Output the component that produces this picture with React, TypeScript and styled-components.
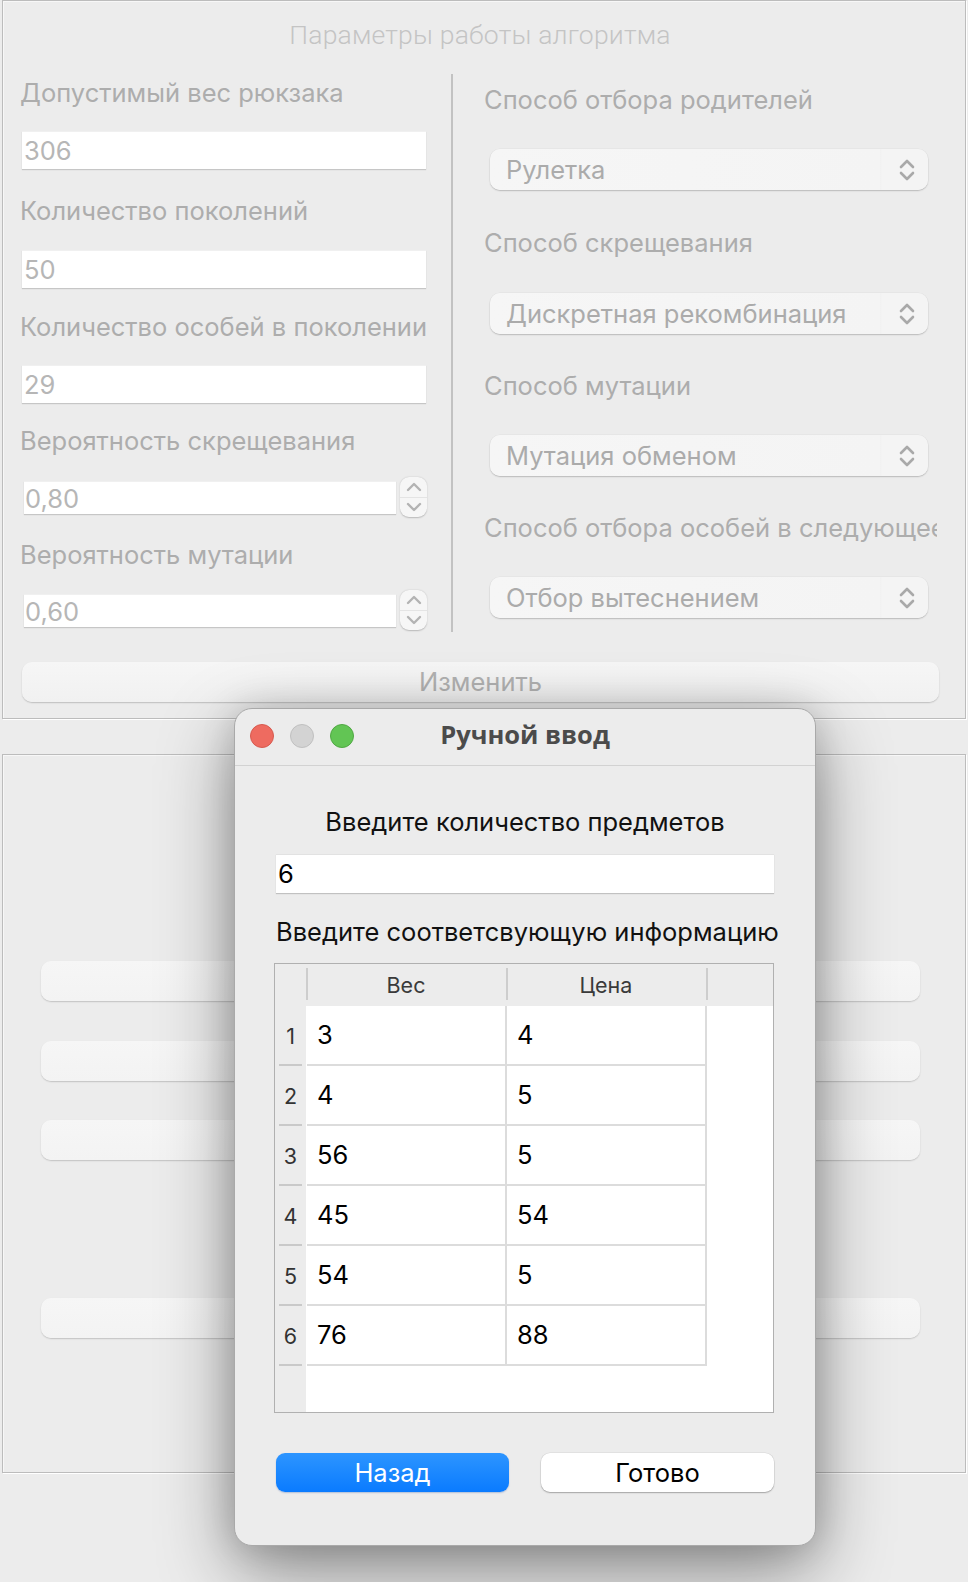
import React from "react";
import styled, { createGlobalStyle } from "styled-components";

const Global = createGlobalStyle`
  html, body { margin: 0; padding: 0; background: #ececec; }
  body { font-family: Inter, "Liberation Sans", "Noto Sans", sans-serif; }
  #root { width: 968px; height: 1582px; }
`;

const Page = styled.div`
  position: relative;
  width: 968px;
  height: 1582px;
  background: #ececec;
  overflow: hidden;
  display: flex;
  flex-direction: column;
`;

const GroupBox = styled.section<{ $gapTop: number }>`
  box-sizing: border-box;
  margin: ${(p) => p.$gapTop}px 2px 0 2px;
  width: 964px;
  height: 719px;
  border: 1px solid #bcbcbc;
  box-shadow: inset 1px 1px 0 #f7f7f7, 1px 1px 0 #ffffff;
  display: flex;
  flex-direction: column;
  flex-shrink: 0;
`;

const GroupTitle = styled.div`
  margin-top: 14px;
  height: 40px;
  line-height: 40px;
  text-align: center;
  padding-right: 8px;
  font-family: Roboto, Inter, sans-serif;
  font-weight: 300;
  font-size: 26.5px;
  color: #c4c4c4;
  letter-spacing: 0.2px;
`;

const Columns = styled.div`
  margin-top: 19px;
  height: 558px;
  display: flex;
  padding-left: 17px;
`;

const LeftColumn = styled.div`
  width: 407px;
  display: flex;
  flex-direction: column;
`;

const Divider = styled.div`
  width: 2px;
  margin-left: 24px;
  background: #c2c2c2;
`;

const RightColumn = styled.div`
  width: 453px;
  margin-left: 31px;
  padding-top: 7px;
  display: flex;
  flex-direction: column;
  overflow: hidden;
`;

const Label = styled.div<{ $gap?: number }>`
  margin-top: ${(p) => p.$gap ?? 0}px;
  height: 38px;
  line-height: 38px;
  font-size: 25.5px;
  color: #adadad;
  white-space: nowrap;
`;

const LineEdit = styled.div<{ $gap: number }>`
  box-sizing: border-box;
  margin: ${(p) => p.$gap}px 0 0 2px;
  width: 404px;
  height: 38px;
  background: #fff;
  border-top: 1px solid #f0f0f0;
  box-shadow: 0 1px 1px rgba(0, 0, 0, 0.16);
  padding-left: 2px;
  line-height: 38px;
  font-size: 25.5px;
  color: #b6b6b6;
`;

const SpinRow = styled.div<{ $gap: number }>`
  margin: ${(p) => p.$gap}px 0 0 4px;
  height: 40px;
  display: flex;
  align-items: center;
`;

const SpinField = styled.div`
  box-sizing: border-box;
  width: 372px;
  height: 33px;
  background: #fff;
  border-top: 1px solid #f0f0f0;
  box-shadow: 0 1px 1px rgba(0, 0, 0, 0.16);
  padding-left: 1px;
  line-height: 33px;
  font-size: 25.5px;
  color: #b6b6b6;
`;

const Stepper = styled.div`
  margin-left: 4px;
  width: 27px;
  height: 40px;
  border-radius: 9px;
  background: #f6f6f6;
  box-shadow: 0 0.5px 1.5px rgba(0, 0, 0, 0.22);
  display: flex;
  flex-direction: column;
`;

const StepHalf = styled.div<{ $top?: boolean }>`
  flex: 1;
  display: flex;
  align-items: center;
  justify-content: center;
  border-bottom: ${(p) => (p.$top ? "1px solid #e4e4e4" : "none")};
`;

const Combo = styled.div<{ $gap: number }>`
  box-sizing: border-box;
  margin: ${(p) => p.$gap}px 0 0 6px;
  width: 438px;
  height: 41px;
  flex-shrink: 0;
  border-radius: 10px;
  background: linear-gradient(90deg, #f6f6f6 0%, #f4f4f4 89%, #f1f1f1 89.2%, #f4f4f4 89.5%, #f4f4f4 100%);
  box-shadow: 0 1px 1.5px rgba(0, 0, 0, 0.2), 0 0 0 0.5px rgba(0, 0, 0, 0.04);
  display: flex;
  align-items: center;
  justify-content: space-between;
  padding: 0 13px 0 16px;
  font-size: 25.5px;
  color: #ababab;
  white-space: nowrap;
`;

const WideButton = styled.div`
  box-sizing: border-box;
  margin: 30px 0 0 19px;
  width: 917px;
  height: 40px;
  border-radius: 10px;
  background: linear-gradient(180deg, #f6f6f6, #f1f1f1);
  box-shadow: 0 1px 1.5px rgba(0, 0, 0, 0.2);
  text-align: center;
  line-height: 40px;
  font-size: 25.5px;
  color: #b1b1b1;
`;

const GhostButton = styled.div<{ $gap: number }>`
  margin: ${(p) => p.$gap}px 0 0 38px;
  width: 879px;
  height: 40px;
  border-radius: 10px;
  background: linear-gradient(180deg, #f6f6f6, #f3f3f3);
  box-shadow: 0 1px 1.5px rgba(0, 0, 0, 0.18);
`;

/* ---------- Dialog ---------- */

const Dialog = styled.div`
  position: absolute;
  left: 234px;
  top: 708px;
  width: 582px;
  height: 838px;
  box-sizing: border-box;
  border-radius: 18px;
  background: #ececec;
  border: 1px solid #a9a9a9;
  box-shadow: 0 26px 75px rgba(0, 0, 0, 0.42), 0 0 34px rgba(0, 0, 0, 0.14);
  display: flex;
  flex-direction: column;
  overflow: hidden;
`;

const TitleBar = styled.div`
  position: relative;
  height: 56px;
  flex-shrink: 0;
  border-bottom: 1px solid #d2d2d2;
  display: flex;
  align-items: center;
  justify-content: center;
`;

const Lights = styled.div`
  position: absolute;
  left: 15px;
  top: 15px;
  display: flex;
  gap: 16px;
`;

const Light = styled.div<{ $c: string; $b: string }>`
  width: 24px;
  height: 24px;
  box-sizing: border-box;
  border-radius: 50%;
  background: ${(p) => p.$c};
  border: 1px solid ${(p) => p.$b};
`;

const DialogTitle = styled.div`
  font-family: "Open Sans", Inter, sans-serif;
  font-weight: 700;
  font-size: 25.5px;
  color: #4b4b4b;
  margin-top: -6px;
`;

const DialogBody = styled.div`
  flex: 1;
  padding: 0 41px;
  display: flex;
  flex-direction: column;
`;

const Prompt = styled.div<{ $gap: number; $center?: boolean }>`
  margin-top: ${(p) => p.$gap}px;
  height: 38px;
  line-height: 38px;
  font-size: 25.5px;
  color: #111;
  text-align: ${(p) => (p.$center ? "center" : "left")};
  white-space: nowrap;
`;

const CountInput = styled.div`
  box-sizing: border-box;
  margin-top: 13px;
  height: 39px;
  background: #fff;
  border-top: 1px solid #e2e2e2;
  box-shadow: 0 1px 1px rgba(0, 0, 0, 0.18);
  padding-left: 2px;
  line-height: 38px;
  font-size: 25.5px;
  color: #000;
`;

const Table = styled.div`
  box-sizing: border-box;
  margin: 12px 0 0 -2px;
  width: 500px;
  height: 450px;
  border: 1px solid #b0b0b0;
  background: #fff;
  display: flex;
  flex-direction: column;
`;

const HeaderRow = styled.div`
  height: 42px;
  flex-shrink: 0;
  background: #ececec;
  display: flex;
`;

const Corner = styled.div`
  width: 31px;
`;

const HeaderCell = styled.div`
  position: relative;
  width: 200px;
  text-align: center;
  line-height: 42px;
  font-size: 21.5px;
  color: #3a3a3a;
  &::before {
    content: "";
    position: absolute;
    left: 0;
    top: 4px;
    bottom: 6px;
    width: 2px;
    background: #cdcdcd;
  }
`;

const HeaderTail = styled(HeaderCell)`
  flex: 1;
`;

const TableBody = styled.div`
  flex: 1;
  display: flex;
`;

const RowHeaders = styled.div`
  width: 31px;
  background: #ececec;
  display: flex;
  flex-direction: column;
`;

const RowHeader = styled.div`
  position: relative;
  height: 60px;
  display: flex;
  align-items: center;
  justify-content: center;
  font-size: 21.5px;
  color: #333;
  &::after {
    content: "";
    position: absolute;
    left: 4px;
    right: 4px;
    bottom: 0;
    height: 2px;
    background: #c9c9c9;
  }
`;

const Grid = styled.div`
  display: grid;
  grid-template-columns: 200px 200px;
  grid-auto-rows: 60px;
  align-self: flex-start;
  margin-left: 1px;
`;

const Cell = styled.div`
  box-sizing: border-box;
  border-right: 2px solid #dcdcdc;
  border-bottom: 2px solid #dcdcdc;
  display: flex;
  align-items: center;
  padding-left: 10px;
  padding-bottom: 2px;
  font-size: 25.5px;
  color: #000;
`;

const ButtonRow = styled.div`
  margin-top: 40px;
  display: flex;
  gap: 32px;
`;

const DlgButton = styled.div<{ $primary?: boolean }>`
  box-sizing: border-box;
  flex: 1;
  height: 39px;
  border-radius: 9px;
  text-align: center;
  line-height: 39px;
  font-size: 25.5px;
  color: ${(p) => (p.$primary ? "#fff" : "#000")};
  background: ${(p) => (p.$primary ? "linear-gradient(180deg, #2d95ff 0%, #0a7bff 100%)" : "#fff")};
  box-shadow: ${(p) =>
    p.$primary
      ? "0 1px 1.5px rgba(0, 60, 160, 0.25)"
      : "0 1px 1.5px rgba(0, 0, 0, 0.28), 0 0 0 0.5px rgba(0, 0, 0, 0.08)"};
`;

const UpDown = ({ color = "#a9a9a9" }: { color?: string }) => (
  <svg width="16" height="24" viewBox="0 0 16 24">
    <polyline points="2,9 8,3 14,9" fill="none" stroke={color} strokeWidth="2.6" strokeLinecap="round" strokeLinejoin="round" />
    <polyline points="2,15 8,21 14,15" fill="none" stroke={color} strokeWidth="2.6" strokeLinecap="round" strokeLinejoin="round" />
  </svg>
);

const Chevron = ({ up }: { up?: boolean }) => (
  <svg width="16" height="10" viewBox="0 0 16 10">
    <polyline
      points={up ? "2,8 8,2 14,8" : "2,2 8,8 14,2"}
      fill="none"
      stroke="#b3b3b3"
      strokeWidth="2.4"
      strokeLinecap="round"
      strokeLinejoin="round"
    />
  </svg>
);

const rows = [
  ["3", "4"],
  ["4", "5"],
  ["56", "5"],
  ["45", "54"],
  ["54", "5"],
  ["76", "88"],
];

export default function App() {
  return (
    <Page>
      <Global />
      <GroupBox $gapTop={0}>
        <GroupTitle>Параметры работы алгоритма</GroupTitle>
        <Columns>
          <LeftColumn>
            <Label>Допустимый вес рюкзака</Label>
            <LineEdit $gap={19}>306</LineEdit>
            <Label $gap={23}>Количество поколений</Label>
            <LineEdit $gap={20}>50</LineEdit>
            <Label $gap={20}>Количество особей в поколении</Label>
            <LineEdit $gap={19}>29</LineEdit>
            <Label $gap={19}>Вероятность скрещевания</Label>
            <SpinRow $gap={17}>
              <SpinField>0,80</SpinField>
              <Stepper>
                <StepHalf $top>
                  <Chevron up />
                </StepHalf>
                <StepHalf>
                  <Chevron />
                </StepHalf>
              </Stepper>
            </SpinRow>
            <Label $gap={19}>Вероятность мутации</Label>
            <SpinRow $gap={16}>
              <SpinField>0,60</SpinField>
              <Stepper>
                <StepHalf $top>
                  <Chevron up />
                </StepHalf>
                <StepHalf>
                  <Chevron />
                </StepHalf>
              </Stepper>
            </SpinRow>
          </LeftColumn>
          <Divider />
          <RightColumn>
            <Label>Способ отбора родителей</Label>
            <Combo $gap={30}>
              <span>Рулетка</span>
              <UpDown />
            </Combo>
            <Label $gap={34}>Способ скрещевания</Label>
            <Combo $gap={31}>
              <span>Дискретная рекомбинация</span>
              <UpDown />
            </Combo>
            <Label $gap={33}>Способ мутации</Label>
            <Combo $gap={30}>
              <span>Мутация обменом</span>
              <UpDown />
            </Combo>
            <Label $gap={33}>Способ отбора особей в следующее поколение</Label>
            <Combo $gap={30}>
              <span>Отбор вытеснением</span>
              <UpDown />
            </Combo>
          </RightColumn>
        </Columns>
        <WideButton>Изменить</WideButton>
      </GroupBox>

      <GroupBox $gapTop={35}>
        <GhostButton $gap={206} />
        <GhostButton $gap={40} />
        <GhostButton $gap={39} />
        <GhostButton $gap={138} />
      </GroupBox>

      <Dialog>
        <TitleBar>
          <Lights>
            <Light $c="#ee6b60" $b="#d65a4f" />
            <Light $c="#d3d3d3" $b="#c0c0c0" />
            <Light $c="#62c554" $b="#50a843" />
          </Lights>
          <DialogTitle>Ручной ввод</DialogTitle>
        </TitleBar>
        <DialogBody>
          <Prompt $gap={37} $center>
            Введите количество предметов
          </Prompt>
          <CountInput>6</CountInput>
          <Prompt $gap={20}>Введите соответсвующую информацию</Prompt>
          <Table>
            <HeaderRow>
              <Corner />
              <HeaderCell>Вес</HeaderCell>
              <HeaderCell>Цена</HeaderCell>
              <HeaderTail />
            </HeaderRow>
            <TableBody>
              <RowHeaders>
                {rows.map((_, i) => (
                  <RowHeader key={i}>{i + 1}</RowHeader>
                ))}
              </RowHeaders>
              <Grid>
                {rows.map((r, i) => (
                  <React.Fragment key={i}>
                    <Cell>{r[0]}</Cell>
                    <Cell>{r[1]}</Cell>
                  </React.Fragment>
                ))}
              </Grid>
            </TableBody>
          </Table>
          <ButtonRow>
            <DlgButton $primary>Назад</DlgButton>
            <DlgButton>Готово</DlgButton>
          </ButtonRow>
        </DialogBody>
      </Dialog>
    </Page>
  );
}
